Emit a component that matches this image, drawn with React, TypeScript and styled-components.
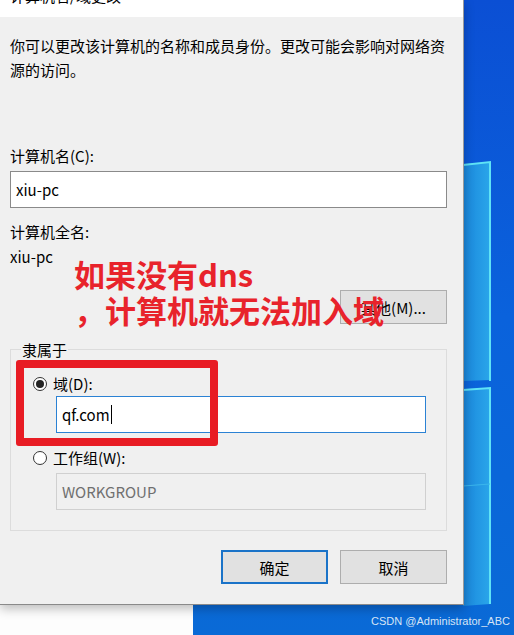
import React from "react";
import styled, { createGlobalStyle } from "styled-components";

const Global = createGlobalStyle`
  html, body { margin: 0; padding: 0; background: #0a5fd6; }
  body { width: 514px; height: 635px; overflow: hidden; }
  * { box-sizing: border-box; }
`;

const FONT = `"Noto Sans CJK SC", "Noto Sans", sans-serif`;

const Desktop = styled.div`
  position: relative;
  width: 514px;
  height: 635px;
  overflow: hidden;
  background: #0a5fd6;
  font-family: ${FONT};
`;

const Wallpaper = styled.svg`
  position: absolute;
  left: 0;
  top: 0;
`;

const BackWindow = styled.div`
  position: absolute;
  left: 0;
  top: 590px;
  width: 193px;
  height: 45px;
  background: #fdfdfd;
`;

const Dialog = styled.div`
  position: absolute;
  left: 0;
  top: 0;
  width: 464px;
  height: 605px;
  background: #f0f0f0;
  border-right: 1px solid #9a9a9a;
  border-bottom: 1px solid #8a8a8a;
  box-shadow: 0 4px 10px rgba(0, 0, 0, 0.25);
  display: flex;
  flex-direction: column;
`;

const TitleBar = styled.div`
  height: 17px;
  background: #ffffff;
  overflow: hidden;
  display: flex;
  justify-content: space-between;
  align-items: flex-end;
  padding: 0 14px 0 10px;
`;

const TitleText = styled.span`
  font-size: 15px;
  line-height: 24px;
  color: #000;
  margin-bottom: 9px;
`;

const CloseGlyph = styled.span`
  font-family: "DejaVu Sans", sans-serif;
  font-size: 18px;
  line-height: 24px;
  color: #000;
  margin-bottom: 10px;
  font-weight: 300;
`;

const Body = styled.div`
  flex: 1;
  display: flex;
  flex-direction: column;
  padding: 17px 16px 0 10px;
  font-size: 15px;
  color: #000;
`;

const Intro = styled.p`
  margin: 0;
  line-height: 24px;
  width: 440px;
`;

const Label = styled.div<{ $mt: number }>`
  margin-top: ${(p) => p.$mt}px;
  line-height: 24px;
  height: 24px;
`;

const TextBox = styled.div<{
  $variant?: "normal" | "focus" | "disabled";
  $ml?: number;
  $mt?: number;
}>`
  height: 37px;
  margin-left: ${(p) => p.$ml ?? 0}px;
  margin-top: ${(p) => p.$mt ?? 0}px;
  border: 1px solid
    ${(p) =>
      p.$variant === "focus" ? "#2b82d4" : p.$variant === "disabled" ? "#d0d0d0" : "#8a8a8a"};
  background: ${(p) => (p.$variant === "disabled" ? "#f0f0f0" : "#ffffff")};
  color: ${(p) => (p.$variant === "disabled" ? "#6f6f6f" : "#000")};
  display: flex;
  align-items: center;
  padding-left: 5px;
  font-size: 15px;
`;

const Caret = styled.span`
  display: inline-block;
  width: 1px;
  height: 19px;
  background: #000;
  margin-left: 1px;
`;

const ButtonRow = styled.div<{ $mt: number }>`
  margin-top: ${(p) => p.$mt}px;
  display: flex;
  justify-content: flex-end;
  gap: 12px;
`;

const Button = styled.div<{ $primary?: boolean }>`
  width: 107px;
  height: 34px;
  background: #e1e1e1;
  border: ${(p) => (p.$primary ? "2px solid #1a73c8" : "1px solid #adadad")};
  display: flex;
  align-items: center;
  justify-content: center;
  font-size: 15px;
  color: #000;
`;

const Group = styled.div`
  margin-top: 25px;
  border: 1px solid #dcdcdc;
  height: 182px;
  display: flex;
  flex-direction: column;
  padding: 0 20px 0 22px;
`;

const GroupLabel = styled.div`
  margin-top: -12px;
  margin-left: -12px;
  align-self: flex-start;
  padding: 0 1px;
  background: #f0f0f0;
  line-height: 24px;
`;

const RadioRow = styled.div<{ $mt: number }>`
  margin-top: ${(p) => p.$mt}px;
  display: flex;
  align-items: center;
  gap: 6px;
  line-height: 24px;
`;

const Radio = styled.span<{ $checked?: boolean }>`
  width: 14px;
  height: 14px;
  border-radius: 50%;
  border: 1px solid #333;
  background: #fff;
  display: flex;
  align-items: center;
  justify-content: center;
  &::after {
    content: "";
    width: 8px;
    height: 8px;
    border-radius: 50%;
    background: ${(p) => (p.$checked ? "#222" : "transparent")};
  }
`;

const RedBox = styled.div`
  position: absolute;
  left: 16px;
  top: 360px;
  width: 202px;
  height: 86px;
  border: 8px solid #e81c24;
  border-radius: 3px;
`;

const Annotation = styled.div`
  position: absolute;
  left: 74px;
  top: 256px;
  color: #e8232b;
  font-size: 31px;
  font-weight: 700;
  line-height: 36px;
`;

const Watermark = styled.div`
  position: absolute;
  right: 4px;
  top: 615px;
  font-family: "Liberation Sans", Arial, sans-serif;
  font-size: 11px;
  color: #d6e4f5;
`;

export default function App() {
  return (
    <Desktop>
      <Global />
      <Wallpaper width="514" height="635" viewBox="0 0 514 635">
        <defs>
          <linearGradient id="bg" x1="0" y1="0" x2="0" y2="1">
            <stop offset="0" stopColor="#0b4fd4" />
            <stop offset="0.5" stopColor="#0a62dc" />
            <stop offset="1" stopColor="#0a6ad6" />
          </linearGradient>
          <linearGradient id="pane" x1="0" y1="0" x2="1" y2="0">
            <stop offset="0" stopColor="#1a86dc" />
            <stop offset="1" stopColor="#2aa6ea" />
          </linearGradient>
        </defs>
        <rect x="0" y="0" width="514" height="635" fill="url(#bg)" />
        <polygon points="463,164 490,162 490,380 463,381" fill="url(#pane)" />
        <polygon points="463,389 490,388 490,604 463,606" fill="url(#pane)" />
        <polyline points="463,165 490,162 490,381" fill="none" stroke="#5fe3f6" strokeWidth="2" />
        <polyline points="463,390 490,388 490,604" fill="none" stroke="#5fe3f6" strokeWidth="2" />
        <line x1="463" y1="486" x2="490" y2="484" stroke="#3ab6ec" strokeWidth="1" />
      </Wallpaper>
      <BackWindow />
      <Dialog>
        <TitleBar>
          <TitleText>计算机名/域更改</TitleText>
          <CloseGlyph>✕</CloseGlyph>
        </TitleBar>
        <Body>
          <Intro>你可以更改该计算机的名称和成员身份。更改可能会影响对网络资源的访问。</Intro>
          <Label $mt={62}>计算机名(C):</Label>
          <TextBox $mt={3}>xiu-pc</TextBox>
          <Label $mt={12}>计算机全名:</Label>
          <Label $mt={1}>xiu-pc</Label>
          <ButtonRow $mt={21}>
            <Button>其他(M)...</Button>
          </ButtonRow>
          <Group>
            <GroupLabel>隶属于</GroupLabel>
            <RadioRow $mt={10}>
              <Radio $checked />
              <span>域(D):</span>
            </RadioRow>
            <TextBox $variant="focus" $ml={23} $mt={0}>
              qf.com
              <Caret />
            </TextBox>
            <RadioRow $mt={13}>
              <Radio />
              <span>工作组(W):</span>
            </RadioRow>
            <TextBox $variant="disabled" $ml={23} $mt={3}>
              WORKGROUP
            </TextBox>
          </Group>
          <ButtonRow $mt={19}>
            <Button $primary>确定</Button>
            <Button>取消</Button>
          </ButtonRow>
        </Body>
      </Dialog>
      <Annotation>
        如果没有dns
        <br />，计算机就无法加入域
      </Annotation>
      <RedBox />
      <Watermark>CSDN @Administrator_ABC</Watermark>
    </Desktop>
  );
}
